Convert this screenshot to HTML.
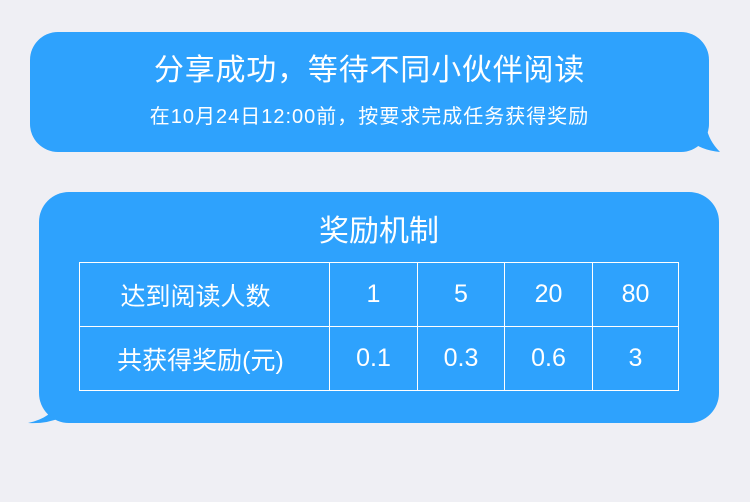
<!DOCTYPE html>
<html><head><meta charset="utf-8"><style>
body{margin:0;width:750px;height:502px;background:#efeff4;position:relative;overflow:hidden;font-family:"Liberation Sans","Noto Sans CJK SC",sans-serif;color:#fff}
.b{position:absolute;background:#2ea2fd}
#b1{left:30px;top:32px;width:679px;height:120px;border-radius:28px}
#b2{left:39px;top:192px;width:680px;height:231px;border-radius:30px}
.t{position:absolute;left:0;right:0;text-align:center}
table{position:absolute;left:40px;top:70px;width:600px;height:129px;border-collapse:collapse;table-layout:fixed}
td{border:1px solid #fff;text-align:center;font-size:25px;padding:0}
</style></head><body>
<svg style="position:absolute;left:0;top:0" width="750" height="502">
<path d="M690 140 Q700 150 720 152 Q708 140 706 125 Z" fill="#2ea2fd"/>
<path d="M60 400 Q52 418 28 423 Q46 424 60 418 Z" fill="#2ea2fd"/>
</svg>
<div class="b" id="b1">
<div class="t" style="top:13px;font-size:30px;letter-spacing:0.8px">分享成功，等待不同小伙伴阅读</div>
<div class="t" style="top:68px;font-size:20px;letter-spacing:1px">在10月24日12:00前，按要求完成任务获得奖励</div>
</div>
<div class="b" id="b2">
<div class="t" style="top:14px;font-size:30px">奖励机制</div>
<table>
<colgroup><col style="width:250px"><col style="width:88px"><col style="width:87px"><col style="width:88px"><col></colgroup>
<tr><td style="padding-right:18px">达到阅读人数</td><td>1</td><td>5</td><td>20</td><td>80</td></tr>
<tr><td style="padding-right:8px">共获得奖励(元)</td><td>0.1</td><td>0.3</td><td>0.6</td><td>3</td></tr>
</table>
</div>
</body></html>
